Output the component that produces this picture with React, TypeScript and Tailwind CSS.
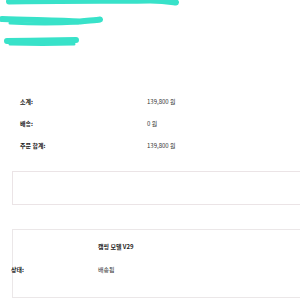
const font = { fontFamily: '"Noto Sans CJK KR", "Liberation Sans", sans-serif' };

function Strokes() {
  return (
    <svg width="300" height="50" viewBox="0 0 300 50" className="block">
      <g stroke="#38e2c9" strokeLinecap="round" fill="none">
        <path d="M9 1.5 C60 0.5 120 1 150 0.5 C165 0.5 172 2 176 2.5" strokeWidth="6" />
        <path d="M2 19 C30 20 60 20.5 80 21.5 C90 20.5 97 20 100 19.5" strokeWidth="6" />
        <path d="M10 23 C30 24 60 24 78 23" strokeWidth="3" />
        <path d="M7 41 C30 40.5 55 40.5 76 40" strokeWidth="6" />
        <path d="M10 44 C30 44.5 55 44.5 74 44" strokeWidth="3" />
      </g>
    </svg>
  );
}

function Row({ label, value }: { label: string; value: string }) {
  return (
    <div className="flex items-center h-[22px]">
      <span className="w-[127px] text-[6px] font-bold text-[#222]">{label}</span>
      <span className="text-[6px] text-[#333]">{value}</span>
    </div>
  );
}

export default function App() {
  return (
    <div className="w-[300px] h-[300px] bg-white overflow-hidden" style={font}>
      <Strokes />
      <div className="mt-[40px] pl-[20px]">
        <Row label="소계:" value="139,800 원" />
        <Row label="배송:" value="0 원" />
        <Row label="주문 합계:" value="139,800 원" />
      </div>
      <div className="mt-[15px] ml-[12px] h-[34px] border border-r-0 border-[#ebe4e6]" />
      <div className="mt-[24px] ml-[12px] h-[69px] border border-r-0 border-[#ebe7e8]">
        <div className="pl-[85px] pt-[12px] h-[16px] text-[6px] font-bold text-[#222]">캠핑 모델 V29</div>
        <div className="flex items-center mt-[19px] -ml-[2px] text-[6px]">
          <span className="w-[87px] font-bold text-[#222]">상태:</span>
          <span className="text-[#333]">배송됨</span>
        </div>
      </div>
    </div>
  );
}
